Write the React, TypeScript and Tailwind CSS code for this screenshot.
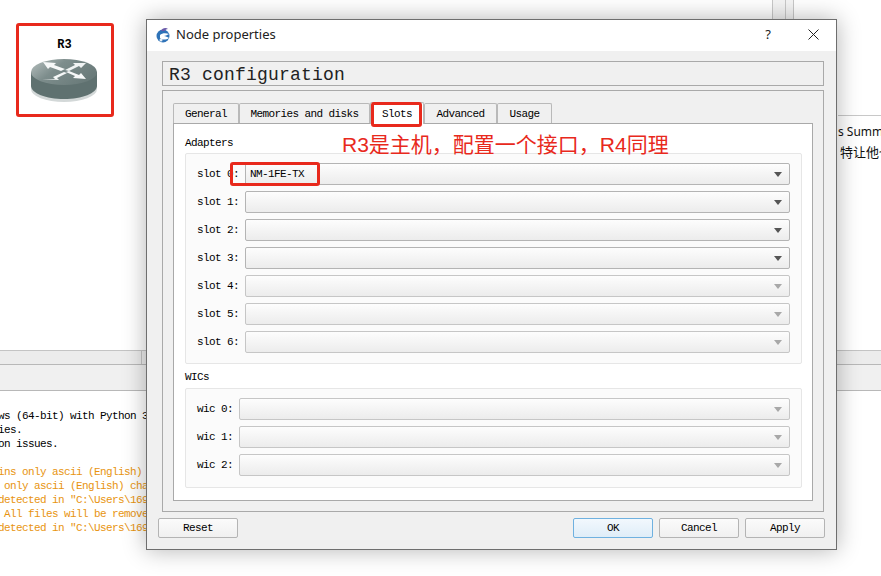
const mono = "font-['Liberation_Mono','Noto_Sans_CJK_SC',monospace] text-[11px] tracking-[-0.6px]";

function RedBox({ className }: { className: string }) {
  return <div className={`absolute border-[3px] border-[#e8291c] rounded-[3px] ${className}`} />;
}

function RouterIcon() {
  return (
    <svg width="68" height="46" viewBox="0 0 68 46">
      <defs>
        <linearGradient id="top" x1="0" y1="0" x2="1" y2="0.5">
          <stop offset="0" stopColor="#b8c1c0" />
          <stop offset="0.45" stopColor="#7d8d8c" />
          <stop offset="1" stopColor="#6a7b7a" />
        </linearGradient>
      </defs>
      <ellipse cx="34" cy="31" rx="33" ry="13" fill="#d3d8d8" />
      <path d="M1 14v14c0 7 15 13 33 13s33-6 33-13V14z" fill="#5f7170" />
      <ellipse cx="34" cy="14" rx="33" ry="13" fill="url(#top)" />
      <path d="M13 4l13 1-2 2 11 4-4 2-11-4-2 2z" fill="#f6f8f8" />
      <path d="M56 5l-13 0 2 2-10 5 4 1 10-5 2 2z" fill="#f0f3f3" />
      <path d="M12 21l13 0-2-2 11-5 3 1-10 5 2 2z" fill="#f6f8f8" />
      <path d="M56 21l-13-1 2-2-9-4 3-1 10 4 2-2z" fill="#f6f8f8" />
    </svg>
  );
}

function GnsIcon() {
  return (
    <svg width="16" height="16" viewBox="0 0 16 16">
      <circle cx="8" cy="9" r="6.500" fill="#2f73b8" />
      <path d="M6 4c1-3 5-4 7-2-2 0-3 1-3 2z" fill="#6a5aa8" />
      <path d="M5 8c2-2 6-2 9-1-2 1-4 2-5 2 2 0 3 1 5 2-3 2-7 2-9 0z" fill="#ffffff" />
      <circle cx="6" cy="13" r="1.500" fill="#e7eef5" />
    </svg>
  );
}

function Combo({ value, disabled }: { value?: string; disabled?: boolean }) {
  return (
    <div className={`flex-1 h-[22px] flex items-center justify-between pl-[4px] pr-[7px] rounded-[2px] border border-[#b4b4b4] bg-gradient-to-b from-[#fdfdfd] to-[#ececec] ${disabled ? "border-[#c6c6c6]" : ""}`}>
      <span className={`${mono} text-black`}>{value}</span>
      <span className={`w-0 h-0 border-x-[4px] border-x-transparent border-t-[5px] ${disabled ? "border-t-[#a8a8a8]" : "border-t-[#555]"}`} />
    </div>
  );
}

function SlotRow({ label, value, disabled, labelWidth }: { label: string; value?: string; disabled?: boolean; labelWidth: string }) {
  return (
    <div className="flex items-center h-[22px]">
      <span className={`${mono} text-black ${labelWidth} shrink-0 whitespace-nowrap`}>{label}</span>
      <Combo value={value} disabled={disabled} />
    </div>
  );
}

function Btn({ label, primary }: { label: string; primary?: boolean }) {
  return (
    <div className={`w-[80px] h-[20px] pt-[1px] flex items-center justify-center rounded-[2px] border ${primary ? "border-[#6fb1e0] bg-gradient-to-b from-[#f2f8fd] to-[#dfedf8]" : "border-[#b4b4b4] bg-gradient-to-b from-[#fbfbfb] to-[#f0f0f0]"}`}>
      <span className={`${mono} text-black`}>{label}</span>
    </div>
  );
}

function Tab({ label, width, active }: { label: string; width: string; active?: boolean }) {
  return (
    <div className={`${width} flex items-center justify-center border border-[#b9b9b9] rounded-t-[2px] pt-[2px] ${active ? "h-[22px] bg-white border-b-0 relative -mb-px" : "h-[20px] bg-[#f0f0f0] border-b-0"}`}>
      <span className={`${mono} text-black`}>{label}</span>
    </div>
  );
}

function NodeDialog() {
  return (
    <div className="absolute left-[146px] top-[19px] w-[691px] h-[531px] flex flex-col border border-[#6e6e6e] bg-[#f0f0f0] shadow-[0_0_22px_rgba(0,0,0,0.3)]">
      <div className="h-[31px] shrink-0 bg-white flex items-center pl-[8px] pr-[17px] pb-[2px]">
        <GnsIcon />
        <span className="ml-[5px] text-[13px] text-[#222] font-['Noto_Sans',sans-serif]">Node properties</span>
        <span className="ml-auto mr-[37px] text-[13px] text-[#222] font-['Noto_Sans',sans-serif]">?</span>
        <svg width="11" height="11" viewBox="0 0 11 11" className="stroke-[#222]">
          <path d="M0.500 0.500l10 10M10.500 0.500l-10 10" strokeWidth="1" fill="none" />
        </svg>
      </div>
      <div className="flex-1 flex flex-col pl-[15px] pr-[12px] pt-[10px]">
        <div className="h-[25px] shrink-0 border border-[#a9a9a9] pl-[6px] pt-[3px] flex items-center">
          <span className="font-['Liberation_Mono',monospace] text-[18px] tracking-[0.2px] text-[#222]">R3 configuration</span>
        </div>
        <div className="mt-[4px] h-[422px] shrink-0 border border-[#a9a9a9] pt-[12px] px-[10px]">
          <div className="flex items-end h-[20px] pl-[0px]">
            <Tab label="General" width="w-[66px]" />
            <Tab label="Memories and disks" width="w-[131px]" />
            <Tab label="Slots" width="w-[54px]" active />
            <Tab label="Advanced" width="w-[73px]" />
            <Tab label="Usage" width="w-[55px]" />
          </div>
          <div className="h-[378px] border border-[#a9a9a9] bg-white pt-[12px] pl-[11px] pr-[10px]">
            <div className={`${mono} text-black h-[14px] leading-[14px]`}>Adapters</div>
            <div className="mt-[3px] h-[211px] border border-[#e6e6e6] rounded-[2px] bg-[#fbfbfb] pt-[9px] pl-[11px] pr-[11px] flex flex-col gap-[6px]">
              <SlotRow label="slot 0:" value="NM-1FE-TX" labelWidth="w-[48px]" />
              <SlotRow label="slot 1:" labelWidth="w-[48px]" />
              <SlotRow label="slot 2:" labelWidth="w-[48px]" />
              <SlotRow label="slot 3:" labelWidth="w-[48px]" />
              <SlotRow label="slot 4:" disabled labelWidth="w-[48px]" />
              <SlotRow label="slot 5:" disabled labelWidth="w-[48px]" />
              <SlotRow label="slot 6:" disabled labelWidth="w-[48px]" />
            </div>
            <div className={`${mono} text-black h-[14px] leading-[14px] mt-[6px]`}>WICs</div>
            <div className="mt-[4px] h-[100px] border border-[#e6e6e6] rounded-[2px] bg-[#fbfbfb] pt-[9px] pl-[11px] pr-[11px] flex flex-col gap-[6px]">
              <SlotRow label="wic 0:" disabled labelWidth="w-[42px]" />
              <SlotRow label="wic 1:" disabled labelWidth="w-[42px]" />
              <SlotRow label="wic 2:" disabled labelWidth="w-[42px]" />
            </div>
          </div>
        </div>
        <div className="flex mt-[6px] -ml-[4px] -mr-[1px] gap-[6px]">
          <Btn label="Reset" />
          <div className="flex-1" />
          <Btn label="OK" primary />
          <Btn label="Cancel" />
          <Btn label="Apply" />
        </div>
      </div>
    </div>
  );
}

const consoleLines = [
  { text: "ws (64-bit) with Python 3", color: "text-black" },
  { text: "ies.", color: "text-black" },
  { text: "on issues.", color: "text-black" },
  { text: "", color: "" },
  { text: "ins only ascii (English)", color: "text-[#e8940f]" },
  { text: " only ascii (English) cha", color: "text-[#e8940f]" },
  { text: "detected in \"C:\\Users\\169", color: "text-[#e8940f]" },
  { text: " All files will be remove", color: "text-[#e8940f]" },
  { text: "detected in \"C:\\Users\\169", color: "text-[#e8940f]" },
];

export default function App() {
  return (
    <div className="relative w-[881px] h-[576px] overflow-hidden bg-white">
      <div className="h-[350px] flex">
        <div className="w-[16px]" />
        <div className="pt-[23px]">
          <div className="w-[97px] h-[93px] flex flex-col items-center pt-[15px]">
            <span className="font-['Liberation_Mono',monospace] text-[12px] font-bold leading-[14px] text-black">R3</span>
            <div className="mt-[6px] -ml-[1px]">
              <RouterIcon />
            </div>
          </div>
        </div>
        <div className="flex-1" />
        <div className="w-[43px] flex flex-col pt-[115px]">
          <div className="border-t border-[#c8c8c8] pt-[8px] text-[12px] leading-[16px] text-[#111] font-['Noto_Sans',sans-serif] whitespace-nowrap overflow-hidden">s Summ</div>
          <div className="pt-[3px] pl-[2px] text-[13px] leading-[17px] text-[#111] font-['Noto_Sans_CJK_SC',sans-serif] whitespace-nowrap overflow-hidden">特让他也</div>
        </div>
      </div>
      <div className="absolute left-[772px] top-0 w-[22px] h-[22px] border-x border-[#c8c8c8] bg-[#f4f4f4]">
        <div className="ml-[12px] w-px h-full bg-[#c8c8c8]" />
      </div>
      <div className="h-[14px] border-t border-[#c4c4c4] bg-[#ececec] pl-[141px]">
        <div className="w-px h-full bg-[#c4c4c4]" />
      </div>
      <div className="h-[27px] border-y border-[#b8b8b8] bg-[#f0f0f0]" />
      <div className="pt-[18px] -ml-[2px]">
        {consoleLines.map((line, i) => (
          <div key={i} className={`h-[14px] leading-[14px] whitespace-pre ${mono} ${line.color}`}>{line.text}</div>
        ))}
      </div>

      <NodeDialog />

      <RedBox className="left-[16px] top-[23px] w-[98px] h-[94px]" />
      <RedBox className="left-[371px] top-[102px] w-[51px] h-[25px]" />
      <RedBox className="left-[230px] top-[162px] w-[90px] h-[24px]" />
      <div className="absolute left-[342px] top-[131px] text-[21px] leading-[27px] text-[#e8291c] font-['Liberation_Sans','Noto_Sans_CJK_SC',sans-serif] whitespace-nowrap">R3是主机，配置一个接口，R4同理</div>
    </div>
  );
}
